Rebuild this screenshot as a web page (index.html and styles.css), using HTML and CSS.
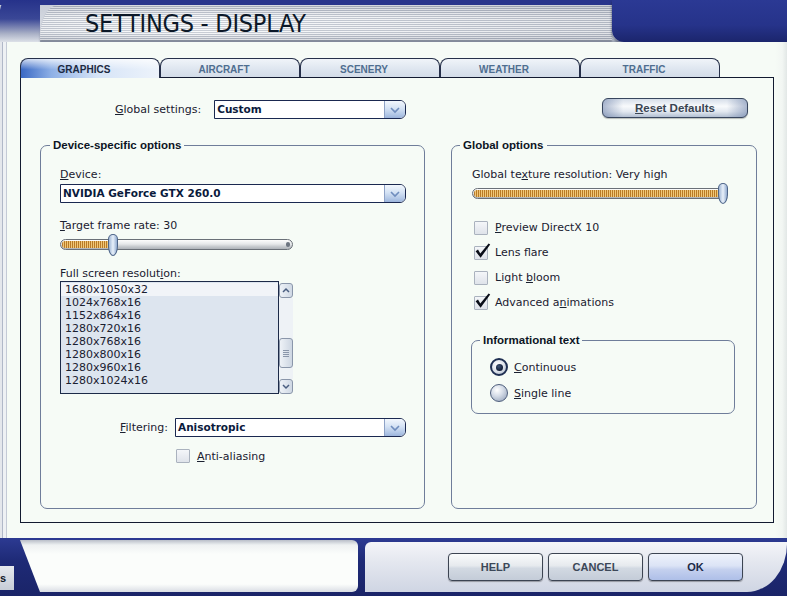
FILE: index.html
```html
<!DOCTYPE html>
<html>
<head>
<meta charset="utf-8">
<title>Settings - Display</title>
<link rel="stylesheet" href="styles.css">
</head>
<body>
<div class="window">
  <header class="titlebar">
    <div class="tb-corner"></div>
    <div class="tb-plate"><h1 class="title">SETTINGS - DISPLAY</h1></div>
    <div class="tb-fill"></div>
  </header>

  <main class="frame">
    <div class="frame-left"></div>
    <div class="frame-content">
      <nav class="tabs">
        <div class="tab active">GRAPHICS</div>
        <div class="tab">AIRCRAFT</div>
        <div class="tab">SCENERY</div>
        <div class="tab">WEATHER</div>
        <div class="tab">TRAFFIC</div>
      </nav>

      <section class="panel">
        <div class="top-row">
          <span class="lbl global-lbl"><u>G</u>lobal settings:</span>
          <div class="combo combo-global">
            <span class="combo-value">Custom</span>
            <span class="combo-btn"><svg width="12" height="8" viewBox="0 0 12 8"><polyline points="2,2 6,6 10,2" fill="none" stroke="#6f8dbd" stroke-width="1.6"/></svg></span>
          </div>
          <button class="btn-reset"><u>R</u>eset Defaults</button>
        </div>

        <div class="groups">
          <fieldset class="group group-device">
            <legend>Device-specific options</legend>
            <div class="group-body device-body">
              <div class="lbl"><u>D</u>evice:</div>
              <div class="combo combo-device">
                <span class="combo-value">NVIDIA GeForce GTX 260.0</span>
                <span class="combo-btn"><svg width="12" height="8" viewBox="0 0 12 8"><polyline points="2,2 6,6 10,2" fill="none" stroke="#6f8dbd" stroke-width="1.6"/></svg></span>
              </div>

              <div class="lbl lbl-rate"><u>T</u>arget frame rate: 30</div>
              <div class="slider slider-rate">
                <div class="track"><div class="fill" style="width:50px"></div><span class="track-end"></span></div>
                <div class="thumb" style="left:48px"></div>
              </div>

              <div class="lbl lbl-res">Full screen resolut<u>i</u>on:</div>
              <div class="listbox">
                <ul class="list-items">
                  <li class="selected">1680x1050x32</li>
                  <li>1024x768x16</li>
                  <li>1152x864x16</li>
                  <li>1280x720x16</li>
                  <li>1280x768x16</li>
                  <li>1280x800x16</li>
                  <li>1280x960x16</li>
                  <li>1280x1024x16</li>
                </ul>
                <div class="scrollbar">
                  <div class="sb-btn"><svg width="10" height="7" viewBox="0 0 10 7"><polyline points="2,5 5,2 8,5" fill="none" stroke="#4a5e80" stroke-width="1.5"/></svg></div>
                  <div class="sb-track"><div class="sb-thumb"><span></span><span></span><span></span><span></span></div></div>
                  <div class="sb-btn"><svg width="10" height="7" viewBox="0 0 10 7"><polyline points="2,2 5,5 8,2" fill="none" stroke="#4a5e80" stroke-width="1.5"/></svg></div>
                </div>
              </div>

              <div class="filter-row">
                <span class="lbl"><u>F</u>iltering:</span>
                <div class="combo combo-filter">
                  <span class="combo-value">Anisotropic</span>
                  <span class="combo-btn"><svg width="12" height="8" viewBox="0 0 12 8"><polyline points="2,2 6,6 10,2" fill="none" stroke="#6f8dbd" stroke-width="1.6"/></svg></span>
                </div>
              </div>

              <div class="check-row aa-row">
                <span class="checkbox"></span>
                <span class="lbl"><u>A</u>nti-aliasing</span>
              </div>
            </div>
          </fieldset>

          <fieldset class="group group-global">
            <legend>Global options</legend>
            <div class="group-body global-body">
              <div class="lbl">Global te<u>x</u>ture resolution: Very high</div>
              <div class="slider slider-tex">
                <div class="track"><div class="fill" style="width:250px"></div></div>
                <div class="thumb" style="left:246px"></div>
              </div>

              <div class="checks">
                <div class="check-row">
                  <span class="checkbox"></span>
                  <span class="lbl"><u>P</u>review DirectX 10</span>
                </div>
                <div class="check-row">
                  <span class="checkbox checked"><svg class="tick" width="16" height="16" viewBox="0 0 16 16"><path d="M0.6 8.2 L3 6.6 L5.3 10.4 L13.6 0.4 L15.2 1.4 L5.6 14.8 Z" fill="#0a0e18"/></svg></span>
                  <span class="lbl">Lens f<u>l</u>are</span>
                </div>
                <div class="check-row">
                  <span class="checkbox"></span>
                  <span class="lbl">Light <u>b</u>loom</span>
                </div>
                <div class="check-row">
                  <span class="checkbox checked"><svg class="tick" width="16" height="16" viewBox="0 0 16 16"><path d="M0.6 8.2 L3 6.6 L5.3 10.4 L13.6 0.4 L15.2 1.4 L5.6 14.8 Z" fill="#0a0e18"/></svg></span>
                  <span class="lbl">Advanced a<u>n</u>imations</span>
                </div>
              </div>

              <fieldset class="group group-info">
                <legend>Informational text</legend>
                <div class="info-body">
                  <div class="radio-row">
                    <span class="radio checked"><span class="radio-dot"></span></span>
                    <span class="lbl"><u>C</u>ontinuous</span>
                  </div>
                  <div class="radio-row">
                    <span class="radio"></span>
                    <span class="lbl"><u>S</u>ingle line</span>
                  </div>
                </div>
              </fieldset>
            </div>
          </fieldset>
        </div>
      </section>
    </div>
    <div class="frame-right"></div>
  </main>

  <footer class="footer">
    <div class="ft-left"><span class="task-stub">s</span></div>
    <div class="ft-status"></div>
    <div class="ft-actions">
      <button class="btn">HELP</button>
      <button class="btn">CANCEL</button>
      <button class="btn btn-ok">OK</button>
    </div>
  </footer>
</div>
</body>
</html>
```

FILE: styles.css
```css
* { box-sizing: border-box; }
html, body { margin: 0; padding: 0; }
body {
  width: 787px;
  height: 596px;
  overflow: hidden;
  background: #1e2a76;
  font-family: "DejaVu Sans", Verdana, sans-serif;
  font-size: 11px;
  color: #1a2030;
}
u { text-decoration: underline; text-underline-offset: 1px; }

.window { width: 787px; height: 596px; display: flex; flex-direction: column; }

/* ---------- title bar ---------- */
.titlebar {
  flex: none;
  height: 42px;
  display: flex;
  background: linear-gradient(to bottom, #29358c 0, #29358c 5px, #c9ced8 5px, #dfe3e9 38px, #9aa2b2 42px);
}
.tb-corner {
  width: 40px;
  background: linear-gradient(to bottom, #26328a 0, #3a4796 45%, #a9b0c6 80%, #dde1e8 100%);
  border-top-left-radius: 10px;
}
.tb-plate {
  width: 572px;
  height: 35px;
  margin-top: 5px;
  border-top-left-radius: 18px 34px;
  background:
    repeating-linear-gradient(to bottom, rgba(255,255,255,0.5) 0, rgba(255,255,255,0.5) 1px, rgba(140,148,164,0.4) 1px, rgba(140,148,164,0.4) 2px),
    linear-gradient(to bottom, rgba(110,118,138,0.5) 0, rgba(255,255,255,0) 35%, rgba(255,255,255,0) 78%, rgba(100,108,128,0.4) 100%),
    linear-gradient(to right, #dfe3e8 0, #f4f6f8 25%, #e2e5ea 60%, #c9cdd5 100%);
  box-shadow: 0 2px 2px rgba(40,50,70,0.35);
}
.title {
  margin: 0;
  padding-left: 45px;
  padding-top: 2px;
  font-family: "DejaVu Sans Condensed", "DejaVu Sans", sans-serif;
  font-stretch: condensed;
  font-weight: normal;
  font-size: 25px;
  line-height: 33px;
  letter-spacing: -0.25px;
  color: #0c1828;
}
.tb-fill {
  flex: 1;
  background: linear-gradient(to bottom, #2b3994 0, #26338a 60%, #1b256c 100%);
  border-bottom-left-radius: 12px;
  box-shadow: -1px 2px 2px rgba(30,40,70,0.4);
}

/* ---------- main frame ---------- */
.frame {
  flex: none;
  height: 496px;
  display: flex;
  background: #f6fbf6;
}
.frame-left {
  width: 8px;
  background: linear-gradient(to right, #e4e7ec 0, #e4e7ec 2px, #b0b8c8 2px, #b0b8c8 3px, #eef1f4 3px, #eef1f4 6px, #c4cad6 6px, #c4cad6 7px, #f6fbf6 7px);
}
.frame-right {
  width: 12px;
  background: linear-gradient(to right, #f6fbf6 0, #f2f6f3 60%, #e2e7e6 100%);
}
.frame-content {
  flex: 1;
  padding: 16px 1px 0 12px;
}

/* tabs */
.tabs { display: flex; height: 19px; align-items: flex-start; }
.tab {
  width: 140px;
  height: 19px;
  border: 1px solid #26304a;
  border-bottom: none;
  border-radius: 8px 8px 0 0;
  background: linear-gradient(to bottom, #f0f4f9 0, #dde5ef 60%, #d3dce8 100%);
  font-family: "Liberation Sans", Arial, sans-serif;
  font-weight: bold;
  font-size: 10px;
  line-height: 21px;
  color: #4f6e90;
  text-align: center;
  padding-right: 12px;
}
.tab.active {
  position: relative;
  z-index: 1;
  height: 20px;
  color: #1c2a42;
  background:
    linear-gradient(to bottom, rgba(255,255,255,0.75) 0, rgba(255,255,255,0) 55%),
    linear-gradient(to right, #3a69c4 0, #8eb0e6 22%, #d6e4f7 55%, #edf3fb 100%);
}

.panel {
  height: 446px;
  border: 1px solid #121a30;
  background: #f6fbf6;
}

/* top row */
.top-row {
  display: flex;
  align-items: flex-start;
  padding: 20px 25px 0 94px;
}
.lbl { line-height: 13px; white-space: nowrap; }
.global-lbl { margin-top: 5px; }
.combo-global { width: 192px; margin-left: 13px; margin-top: 2px; }

.combo {
  display: flex;
  height: 19px;
  border: 1px solid #1a2850;
  border-radius: 0 6px 6px 0;
  background: #ffffff;
}
.combo-value {
  flex: 1;
  padding-left: 2px;
  font-family: "DejaVu Sans", Verdana, sans-serif;
  font-weight: bold;
  font-size: 10.5px;
  line-height: 17px;
  color: #0a1a3c;
  white-space: nowrap;
  overflow: hidden;
}
.combo-btn {
  width: 21px;
  display: flex;
  align-items: center;
  justify-content: center;
  border-left: 1px solid #8ea2c6;
  border-radius: 0 5px 5px 0;
  background: linear-gradient(to bottom, #f2f7fd 0, #d4e2f4 45%, #b2c7e6 80%, #9cb4dc 100%);
}

.btn-reset {
  margin-left: auto;
  width: 146px;
  height: 20px;
  padding: 0;
  border: 1px solid #38465e;
  border-radius: 6px;
  background:
    linear-gradient(to right, rgba(110,130,170,0.55) 0, rgba(255,255,255,0) 14%, rgba(255,255,255,0) 86%, rgba(110,130,170,0.55) 100%),
    linear-gradient(to bottom, #d6dee9 0, #f8fafc 40%, #e2e8f0 70%, #b2bfd2 100%);
  font-family: "Liberation Sans", Arial, sans-serif;
  font-weight: bold;
  font-size: 11.5px;
  line-height: 18px;
  color: #3a4452;
  box-shadow: 0 1px 1px rgba(0,0,0,0.25);
}

/* group boxes */
.groups { display: flex; margin-top: 20px; padding-left: 19px; }
.group {
  margin: 0;
  padding: 0;
  min-width: 0;
  border: 1px solid #6f7d9a;
  border-radius: 7px;
}
.group legend {
  margin-left: 8px;
  padding: 0 3px;
  font-family: "Liberation Sans", Arial, sans-serif;
  font-weight: bold;
  font-size: 11.5px;
  line-height: 13px;
  color: #0c1424;
}
.group-device { width: 385px; height: 370px; }
.group-device legend { margin-left: 9px; }
.group-global { width: 306px; height: 370px; margin-left: 26px; }

.device-body { padding: 16px 18px 0 19px; }
.global-body { padding: 16px 20px 0 20px; }

.combo-device { margin-top: 3px; }
.lbl-rate { margin-top: 16px; }
.lbl-res { margin-top: 11px; }

/* sliders */
.slider { position: relative; height: 22px; margin-top: 2px; padding-top: 5px; }
.slider-rate { width: 233px; }
.slider-tex { width: 256px; height: 21px; margin-top: 2px; }
.track {
  position: relative;
  height: 11px;
  border: 1px solid #6a7078;
  border-radius: 6px;
  background: linear-gradient(to bottom, #fdfdfd 0, #e6e8ea 45%, #c4c8cd 75%, #aeb3b9 100%);
  overflow: hidden;
}
.fill {
  height: 7px;
  margin: 1px 0 0 1px;
  border-radius: 3px 0 0 3px;
  background: repeating-linear-gradient(to right, #b97a26 0, #b97a26 1px, #f0c778 1px, #f0c778 2px);
}
.track-end {
  position: absolute;
  right: 2px;
  top: 2px;
  width: 4px;
  height: 5px;
  border-radius: 2px;
  background: #6c7480;
}
.thumb {
  position: absolute;
  top: 0;
  width: 10px;
  height: 100%;
  border: 1px solid #4d6488;
  border-radius: 5px 5px 5px 5px / 5px 5px 10px 10px;
  background: linear-gradient(to right, #9fb5d4 0, #e8f0fa 50%, #92abd0 100%);
}

/* listbox */
.listbox { display: flex; width: 233px; height: 113px; margin-top: 1px; }
.list-items {
  flex: 1;
  margin: 0;
  padding: 1px 0 0 0;
  list-style: none;
  border: 1px solid #1c2a48;
  background: #dde5ef;
}
.list-items li { line-height: 13px; padding-left: 4px; color: #1a2030; }
.list-items li.selected { background: #f1f4f8; }
.scrollbar {
  width: 14px;
  display: flex;
  flex-direction: column;
  padding-top: 2px;
}
.sb-btn {
  height: 15px;
  display: flex;
  align-items: center;
  justify-content: center;
  border: 1px solid #8a96aa;
  border-radius: 3px;
  background: linear-gradient(to right, #eef2f7, #cfd8e4);
}
.sb-track { flex: 1; background: #eef2f6; padding-top: 40px; }
.sb-thumb {
  height: 30px;
  border: 1px solid #8a96aa;
  border-radius: 3px;
  background: linear-gradient(to right, #eef2f7, #cdd6e2);
  display: flex;
  flex-direction: column;
  align-items: center;
  justify-content: center;
  gap: 1px;
}
.sb-thumb span { width: 6px; height: 1px; background: #8a96aa; }

/* filtering */
.filter-row {
  display: flex;
  justify-content: flex-end;
  align-items: center;
  gap: 7px;
  margin-top: 24px;
}
.combo-filter { width: 231px; }

/* checkboxes */
.check-row { display: flex; align-items: center; gap: 7px; }
.aa-row { margin-top: 12px; margin-left: 116px; }
.checks { margin-top: 11px; padding-left: 2px; }
.checks .check-row { height: 25px; }
.checkbox {
  position: relative;
  width: 14px;
  height: 14px;
  flex: none;
  border: 1px solid #aab2be;
  border-radius: 1px;
  background: linear-gradient(to bottom, #f4f6f9 0, #dfe3ea 100%);
}
.tick { position: absolute; left: 0; top: -4px; }

/* informational text */
.group-info { width: 264px; height: 80px; margin-top: 19px; margin-left: -1px; }
.info-body { padding: 7px 0 0 18px; }
.radio-row { display: flex; align-items: center; gap: 6px; height: 26px; }
.radio {
  width: 18px;
  height: 18px;
  flex: none;
  border-radius: 50%;
  border: 1px solid #4e5e7c;
  background: radial-gradient(circle at 38% 32%, #ffffff 0, #d6dde8 40%, #8c9bb4 100%);
  display: flex;
  align-items: center;
  justify-content: center;
}
.radio.checked {
  border: 2px solid #1f2f52;
  background: radial-gradient(circle at 40% 35%, #ffffff 0, #dfe4ec 50%, #a6b2c4 100%);
}
.radio-dot {
  width: 7px;
  height: 7px;
  border-radius: 50%;
  background: radial-gradient(circle at 40% 35%, #3e5274 0, #0f1a34 70%);
}

/* ---------- footer ---------- */
.footer {
  flex: none;
  height: 58px;
  display: flex;
  background: linear-gradient(to bottom, #2c3a92 0, #1e2a76 40%, #1a2468 100%);
}
.ft-left {
  width: 20px;
  display: flex;
  align-items: flex-end;
  padding-bottom: 6px;
}
.task-stub {
  width: 14px;
  height: 24px;
  background: linear-gradient(to bottom, #e6e9ee, #c6ccd6);
  font-family: "Liberation Sans", Arial, sans-serif;
  font-weight: bold;
  font-size: 11px;
  line-height: 24px;
  color: #101828;
}
.ft-status {
  width: 338px;
  height: 52px;
  margin-top: 2px;
  border-radius: 0 6px 6px 0;
  clip-path: polygon(0 0, 100% 0, 100% 100%, 20px 100%);
  background: linear-gradient(to bottom, #b9bec8 0, #eef1f2 5px, #fbfdfb 14px, #fbfdfb 85%, #d9dde4 100%);
}
.ft-actions {
  flex: 1;
  height: 50px;
  margin-top: 4px;
  margin-left: 7px;
  display: flex;
  align-items: center;
  gap: 5px;
  padding-left: 83px;
  border-radius: 6px 0 40px 0 / 6px 0 48px 0;
  background: linear-gradient(to bottom, #f4f5f9 0, #e4e7ef 40%, #cfd5e3 100%);
}
.btn {
  width: 95px;
  height: 28px;
  padding: 0;
  border: 1px solid #3c4452;
  border-radius: 4px;
  background: linear-gradient(to bottom, #fafbfc 0, #e6eaee 45%, #d2d9e2 55%, #c4ccd8 100%);
  font-family: "Liberation Sans", Arial, sans-serif;
  font-weight: bold;
  font-size: 11px;
  color: #3c4858;
  box-shadow: 0 1px 1px rgba(0,0,0,0.3);
}
.btn-ok {
  color: #1c2a48;
  background: linear-gradient(to bottom, #eef2fb 0, #dce4f6 45%, #c4d0ee 60%, #aebfe8 100%);
}
```
